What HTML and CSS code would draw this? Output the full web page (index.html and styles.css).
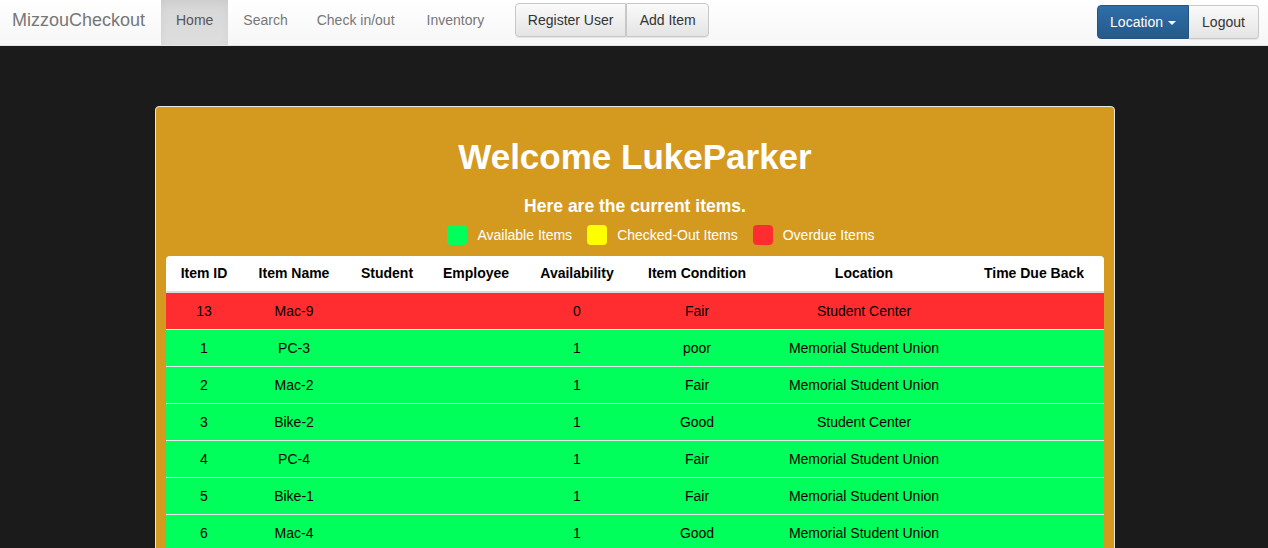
FILE: index.html
```html
<!DOCTYPE html>
<html>
<head>
<meta charset="utf-8">
<title>MizzouCheckout</title>
<link rel="stylesheet" href="styles.css">
</head>
<body>
<nav class="navbar">
  <div class="nav-left">
    <a class="brand">MizzouCheckout</a>
    <ul class="nav-links">
      <li class="active"><a>Home</a></li>
      <li><a>Search</a></li>
      <li><a>Check in/out</a></li>
      <li><a>Inventory</a></li>
    </ul>
    <div class="btn-group">
      <button class="btn btn-default">Register User</button><button class="btn btn-default">Add Item</button>
    </div>
  </div>
  <div class="nav-right">
    <button class="btn btn-primary">Location <span class="caret"></span></button><button class="btn btn-default">Logout</button>
  </div>
</nav>
<main class="page">
  <section class="card">
    <h1 class="title">Welcome LukeParker</h1>
    <h4 class="subtitle">Here are the current items.</h4>
    <div class="legend">
      <span class="swatch green"></span><span class="legend-label">Available Items</span>
      <span class="swatch yellow"></span><span class="legend-label">Checked-Out Items</span>
      <span class="swatch red"></span><span class="legend-label">Overdue Items</span>
    </div>
    <table class="items">
      <colgroup>
        <col class="c1"><col class="c2"><col class="c3"><col class="c4"><col class="c5"><col class="c6"><col class="c7"><col class="c8">
      </colgroup>
      <thead>
        <tr><th>Item ID</th><th>Item Name</th><th>Student</th><th>Employee</th><th>Availability</th><th>Item Condition</th><th>Location</th><th>Time Due Back</th></tr>
      </thead>
      <tbody>
        <tr class="overdue"><td>13</td><td>Mac-9</td><td></td><td></td><td>0</td><td>Fair</td><td>Student Center</td><td></td></tr>
        <tr class="available"><td>1</td><td>PC-3</td><td></td><td></td><td>1</td><td>poor</td><td>Memorial Student Union</td><td></td></tr>
        <tr class="available"><td>2</td><td>Mac-2</td><td></td><td></td><td>1</td><td>Fair</td><td>Memorial Student Union</td><td></td></tr>
        <tr class="available"><td>3</td><td>Bike-2</td><td></td><td></td><td>1</td><td>Good</td><td>Student Center</td><td></td></tr>
        <tr class="available"><td>4</td><td>PC-4</td><td></td><td></td><td>1</td><td>Fair</td><td>Memorial Student Union</td><td></td></tr>
        <tr class="available"><td>5</td><td>Bike-1</td><td></td><td></td><td>1</td><td>Fair</td><td>Memorial Student Union</td><td></td></tr>
        <tr class="available"><td>6</td><td>Mac-4</td><td></td><td></td><td>1</td><td>Good</td><td>Memorial Student Union</td><td></td></tr>
      </tbody>
    </table>
  </section>
</main>
</body>
</html>
```

FILE: styles.css
```css
* { box-sizing: border-box; }
html, body { margin: 0; padding: 0; }
body {
  background: #1b1b1b;
  font-family: "Liberation Sans", Arial, Helvetica, sans-serif;
  font-size: 14px;
  line-height: 20px;
  color: #333;
  overflow: hidden;
}
.navbar {
  height: 46px;
  display: flex;
  justify-content: space-between;
  align-items: stretch;
  background: linear-gradient(to bottom, #ffffff 0%, #f6f6f6 100%);
  border-bottom: 1px solid #e4e4e4;
}
.nav-left { display: flex; align-items: stretch; }
.brand {
  padding: 10px 15px 0 12px;
  font-size: 18px;
  line-height: 20px;
  color: #777;
  width: 161px;
  white-space: nowrap;
}
.nav-links {
  list-style: none;
  margin: 0;
  padding: 0;
  display: flex;
}
.nav-links li a {
  display: block;
  padding: 10px 15px 0 15px;
  height: 45px;
  color: #777;
  font-size: 14px;
  white-space: nowrap;
}
.nav-links li:nth-child(2) a { padding-left: 15px; padding-right: 14px; }
.nav-links li:nth-child(3) a { padding-left: 15px; padding-right: 16px; }
.nav-links li:nth-child(4) a { padding-left: 16px; padding-right: 16px; }
.nav-links li.active a {
  background: linear-gradient(to bottom, #d6d6d6 0%, #dedede 100%);
  box-shadow: inset 0 3px 9px rgba(0,0,0,0.05);
  color: #555;
}
.btn-group { display: flex; align-items: flex-start; padding-top: 3px; margin-left: 15px; }
.btn {
  font-family: "Liberation Sans", Arial, Helvetica, sans-serif;
  font-size: 14px;
  line-height: 20px;
  height: 34px;
  padding: 6px 12px;
  border-radius: 4px;
  cursor: pointer;
  white-space: nowrap;
}
.btn-default {
  color: #333;
  background: linear-gradient(to bottom, #fafafa 0%, #e4e4e4 100%);
  border: 1px solid #c8c8c8;
  box-shadow: inset 0 1px 0 rgba(255,255,255,0.15), 0 1px 1px rgba(0,0,0,0.075);
}
.btn-group .btn:first-child { border-top-right-radius: 0; border-bottom-right-radius: 0; width: 111px; padding: 6px 0; }
.btn-group .btn:last-child { border-top-left-radius: 0; border-bottom-left-radius: 0; margin-left: 0; width: 83px; padding: 6px 0; border-left: 1px solid #c8c8c8; }
.nav-right { display: flex; align-items: flex-start; padding-top: 5px; padding-right: 9px; }
.btn-primary {
  color: #fff;
  background: linear-gradient(to bottom, #2f6ea8 0%, #255a8a 100%);
  border: 1px solid #245580;
  border-top-right-radius: 0;
  border-bottom-right-radius: 0;
  width: 92px;
  padding: 6px 0;
}
.nav-right .btn-default {
  border-top-left-radius: 0;
  border-bottom-left-radius: 0;
  border-left: 0;
  width: 70px;
  padding: 6px 0;
}
.caret {
  display: inline-block;
  width: 0;
  height: 0;
  margin-left: 1px;
  vertical-align: middle;
  border-top: 4px solid #fff;
  border-left: 4px solid transparent;
  border-right: 4px solid transparent;
}
.page { padding-top: 60px; padding-left: 2px; }
.card {
  width: 960px;
  margin: 0 auto;
  background: #d49a1f;
  border: 1px solid #e6e6e6;
  border-radius: 4px;
  padding: 20px 10px 0 10px;
  min-height: 500px;
}
.title {
  margin: 10px 0 0 0;
  text-align: center;
  color: #fff;
  font-size: 35px;
  line-height: 40px;
  font-weight: bold;
}
.subtitle {
  margin: 19px 0 0 0;
  text-align: center;
  color: #fff;
  font-size: 17.5px;
  line-height: 20px;
  font-weight: bold;
}
.legend {
  display: flex;
  justify-content: center;
  align-items: center;
  margin-top: 9px;
  padding-left: 52px;
  height: 20px;
  color: #fff;
  font-size: 14px;
}
.swatch {
  display: inline-block;
  width: 20px;
  height: 20px;
  border-radius: 4px;
  margin-right: 10px;
}
.legend-label { margin-right: 15px; }
.legend-label:last-child { margin-right: 0; }
.swatch.green { background: #00ff5a; }
.swatch.yellow { background: #ffff00; }
.swatch.red { background: #ff2d30; }
.items {
  margin-top: 11px;
  width: 938px;
  border-collapse: separate;
  border-spacing: 0;
  table-layout: fixed;
  color: #000;
}
col.c1 { width: 76px; }
col.c2 { width: 104px; }
col.c3 { width: 82px; }
col.c4 { width: 96px; }
col.c5 { width: 106px; }
col.c6 { width: 134px; }
col.c7 { width: 200px; }
col.c8 { width: 140px; }
.items th {
  background: #fff;
  font-weight: bold;
  text-align: center;
  padding: 7px 4px 8px 4px;
  border-bottom: 2px solid #dcdcdc;
  white-space: nowrap;
}
.items th:first-child { border-top-left-radius: 4px; }
.items th:last-child { border-top-right-radius: 4px; }
.items td {
  text-align: center;
  padding: 8px 4px;
  height: 37px;
  border-top: 1px solid #e8e8e8;
  white-space: nowrap;
}
.items tbody tr:first-child td { border-top: 0; height: 36px; padding-top: 8px; }
.items tr.overdue td { background: #ff2d30; }
.items tr.available td { background: #00ff5a; }
```
